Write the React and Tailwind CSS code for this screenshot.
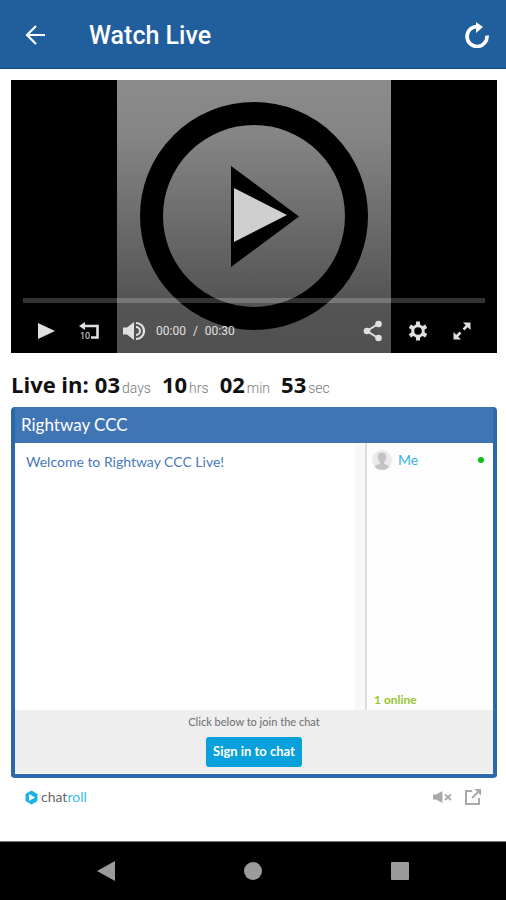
import React from 'react';

const Icons = {
  Back: () => <svg className="w-5 h-5" viewBox="0 0 20 20" fill="none" stroke="currentColor" strokeWidth="2.200"><path d="M20 10H2M11 1L2 10l9 9" /></svg>,
  Reload: () => <svg className="w-6 h-[26px]" viewBox="0 0 24 26" fill="none"><path d="M22 13.500A10 10 0 1 1 12 4.500" stroke="currentColor" strokeWidth="3.600" /><path d="M11 0l7 5-7 6z" fill="currentColor" /></svg>,
  Play: () => <svg className="w-[18px] h-[18px]" viewBox="0 0 18 18" fill="currentColor"><path d="M1 1l17 8-17 8z" /></svg>,
  Rewind: () => (
    <svg className="w-5 h-[18px]" viewBox="0 0 20 18" fill="none">
      <path d="M5 4h13.500v11.500H12" stroke="currentColor" strokeWidth="2.600" />
      <path d="M0 4l6-4v8z" fill="currentColor" />
      <text x="1" y="16.500" fontSize="9" fontFamily="Roboto, sans-serif" fill="currentColor">10</text>
    </svg>
  ),
  Volume: () => (
    <svg className="w-[22px] h-5" viewBox="0 0 22 20" fill="none">
      <path d="M0 6.500h4L11 1v18l-7-5.500H0z" fill="currentColor" />
      <path d="M13 6a4 4 0 0 1 0 8" stroke="currentColor" strokeWidth="2" />
      <path d="M13 2a8 8 0 0 1 0 16" stroke="currentColor" strokeWidth="2.200" />
    </svg>
  ),
  Share: () => (
    <svg className="w-5 h-[22px]" viewBox="0 0 20 22" fill="currentColor">
      <path d="M15 4L4 11l11 7" fill="none" stroke="currentColor" strokeWidth="2" />
      <circle cx="15.500" cy="4" r="3.300" />
      <circle cx="4" cy="11" r="3.300" />
      <circle cx="15.500" cy="18" r="3.300" />
    </svg>
  ),
  Gear: () => (
    <svg className="w-5 h-5" viewBox="0 0 20 20" fill="none" stroke="currentColor">
      <circle cx="10" cy="10" r="5.300" strokeWidth="3" />
      <path d="M10 .5v4M10 15.500v4M1.800 5.200l3.400 2M14.800 12.800l3.400 2M1.800 14.800l3.400-2M14.800 7.200l3.400-2" strokeWidth="4" />
    </svg>
  ),
  Expand: () => (
    <svg className="w-[18px] h-[18px]" viewBox="0 0 18 18" fill="currentColor">
      <path d="M10 0.500h7.500V8zM8 17.500H.5V10z" />
      <path d="M10.500 7.500L14.500 3.500M3.500 14.500l4-4" stroke="currentColor" strokeWidth="2.600" />
    </svg>
  ),
  Avatar: () => (
    <svg className="w-5 h-5" viewBox="0 0 20 20">
      <circle cx="10" cy="10" r="10" fill="#ebebeb" />
      <path d="M10 2.500c3 0 4.500 2 4.300 4.800-.1 2-1 3.700-2.100 4.700v1.500c0 .8 3.800 1.200 5.100 3.200A10 10 0 0 1 10 20a10 10 0 0 1-7.300-3.300c1.300-2 5.100-2.400 5.100-3.200V12c-1.100-1-2-2.700-2.100-4.700C5.500 4.500 7 2.500 10 2.500z" fill="#c4c4c4" />
    </svg>
  ),
  Chatroll: () => (
    <svg className="w-[13px] h-[15px]" viewBox="0 0 13 15">
      <path d="M6.500 1.500l5 3v6l-5 3-5-3v-6z" fill="#1eb1e6" stroke="#1eb1e6" strokeWidth="2" strokeLinejoin="round" />
      <path d="M4 4l6 3.500-3.500 2L4 11z" fill="#fff" />
    </svg>
  ),
  Mute: () => <svg className="w-5 h-[14px]" viewBox="0 0 20 14"><path d="M0 4.500h3L9.500 1v12L3 9.500H0z" fill="currentColor" /><path d="M12 4.500l6 5.500M18 4.500L12 10" stroke="currentColor" strokeWidth="1.800" /></svg>,
  PopOut: () => (
    <svg className="w-4 h-4" viewBox="0 0 16 16" fill="none" stroke="currentColor" strokeWidth="2">
      <path d="M7 2H1v13h13V9" />
      <path d="M7 9l6-6" />
      <path d="M9.500 0H16v6.500z" fill="currentColor" stroke="none" />
    </svg>
  ),
};

const countdown = [
  { value: '03', unit: 'days' },
  { value: '10', unit: 'hrs' },
  { value: '02', unit: 'min' },
  { value: '53', unit: 'sec' },
];

const Header = () => (
  <header className="flex items-center h-[69px] pl-[25px] pr-[17px] pt-px bg-[#215e9e] border-b border-[#154b86] text-white">
    <button aria-label="Back"><Icons.Back /></button>
    <h1 className="flex-1 pl-11 pt-0.5 text-[25px] font-medium font-['Roboto',sans-serif]">Watch Live</h1>
    <button aria-label="Reload"><Icons.Reload /></button>
  </header>
);

const Poster = () => (
  <svg className="h-full mx-auto" viewBox="0 0 274 273">
    <defs>
      <linearGradient id="shade" x1="0" y1="0" x2="0" y2="1">
        <stop offset="0" stopColor="#8b8b8b" />
        <stop offset="0.2" stopColor="#858585" />
        <stop offset="0.8" stopColor="#555" />
        <stop offset="1" stopColor="#505050" />
      </linearGradient>
    </defs>
    <rect width="274" height="273" fill="url(#shade)" />
    <circle cx="137" cy="136" r="102.500" fill="none" stroke="#000" strokeWidth="23" />
    <path d="M114 86l68 50.500-68 50.500z" fill="#000" />
    <path d="M117 108l53 27-53 27z" fill="#cfcfcf" />
  </svg>
);

const Player = () => (
  <section className="relative aspect-[486/273] bg-black">
    <Poster />
    <div className="absolute inset-x-0 bottom-0 px-3 text-[#e0e0e0]">
      <div className="h-[5px] bg-white/20" />
      <div className="flex items-center h-[50px] pt-1.5 px-3.5">
        <button aria-label="Play"><Icons.Play /></button>
        <button aria-label="Back 10 seconds" className="ml-6"><Icons.Rewind /></button>
        <button aria-label="Volume" className="ml-6"><Icons.Volume /></button>
        <span className="flex gap-[7px] ml-[11px] text-xs font-['Roboto',sans-serif]">
          <span>00:00</span>
          <span>/</span>
          <span>00:30</span>
        </span>
        <div className="flex items-center gap-[25px] ml-auto">
          <button aria-label="Share"><Icons.Share /></button>
          <button aria-label="Settings"><Icons.Gear /></button>
          <button aria-label="Full screen"><Icons.Expand /></button>
        </div>
      </div>
    </div>
  </section>
);

const Countdown = () => (
  <div className="flex items-baseline h-[54px] pt-[15px] text-[22px] leading-8 font-bold text-[#111] font-['Open_Sans',sans-serif]">
    <span className="mr-1.5">Live in:</span>
    {countdown.map((item) => (
      <span key={item.unit} className="mr-[11px]">
        {item.value}
        <span className="ml-0.5 text-sm font-light text-[#777] font-['Roboto',sans-serif]">{item.unit}</span>
      </span>
    ))}
  </div>
);

const Chat = () => (
  <section className="rounded border-4 border-t-0 border-[#2d68ad] bg-[#4075b5]">
    <h2 className="h-9 pl-1.5 text-[17px] leading-9 text-white">Rightway CCC</h2>
    <div className="flex h-[267px] bg-white">
      <p className="flex-1 pl-[11px] pt-[7px] text-sm leading-6 text-[#4a78b8]">Welcome to Rightway CCC Live!</p>
      <div className="w-2.5 bg-[#f8f8f9]" />
      <aside className="flex flex-col w-32 border-l-2 border-[#dcdcde] bg-[#fdfdfd]">
        <div className="flex items-center h-[34px] pl-[5px] pr-[9px]">
          <Icons.Avatar />
          <a href="#me" className="pl-1.5 text-sm text-[#36b4e5]">Me</a>
          <span className="w-1.5 h-1.5 ml-auto rounded-full bg-[#0bbd12]" />
        </div>
        <p className="mt-auto pl-[7px] text-xs leading-5 font-bold text-[#96c72e]">1 online</p>
      </aside>
    </div>
    <div className="flex flex-col items-center h-16 pt-0.5 bg-[#eee] border-b border-white">
      <p className="text-[11px] leading-5 font-medium text-[#72777a]">Click below to join the chat</p>
      <button className="h-[30px] mt-[5px] px-[7px] rounded-[3px] bg-[#08a1dc] text-[13px] font-bold text-white">Sign in to chat</button>
    </div>
  </section>
);

export default function App() {
  return (
    <div className="flex flex-col min-h-screen bg-white font-['Lato',sans-serif]">
      <Header />
      <main className="flex-1 pl-[11px] pr-[9px] pt-[11px]">
        <Player />
        <Countdown />
        <Chat />
        <footer className="flex items-center h-[38px] pl-3.5 pr-4 text-[#aaa]">
          <a href="#chatroll" className="flex items-center gap-[3px] text-sm text-[#666]">
            <Icons.Chatroll />
            <span>chat<span className="text-[#3abbe9]">roll</span></span>
          </a>
          <button aria-label="Mute" className="ml-auto"><Icons.Mute /></button>
          <button aria-label="Open in new window" className="ml-3"><Icons.PopOut /></button>
        </footer>
      </main>
      <nav className="flex items-center justify-between h-[59px] px-24 border-t border-[#777] bg-black text-[#9b9b9b]">
        <button aria-label="Back"><svg className="w-5 h-5" viewBox="0 0 20 20" fill="currentColor"><path d="M1 10L19 0v20z" /></svg></button>
        <button aria-label="Home"><svg className="w-5 h-5" viewBox="0 0 20 20" fill="currentColor"><circle cx="10" cy="10" r="9" /></svg></button>
        <button aria-label="Recent apps"><svg className="w-5 h-5" viewBox="0 0 20 20" fill="currentColor"><rect x="1" y="1" width="18" height="18" rx="1" /></svg></button>
      </nav>
    </div>
  );
}
